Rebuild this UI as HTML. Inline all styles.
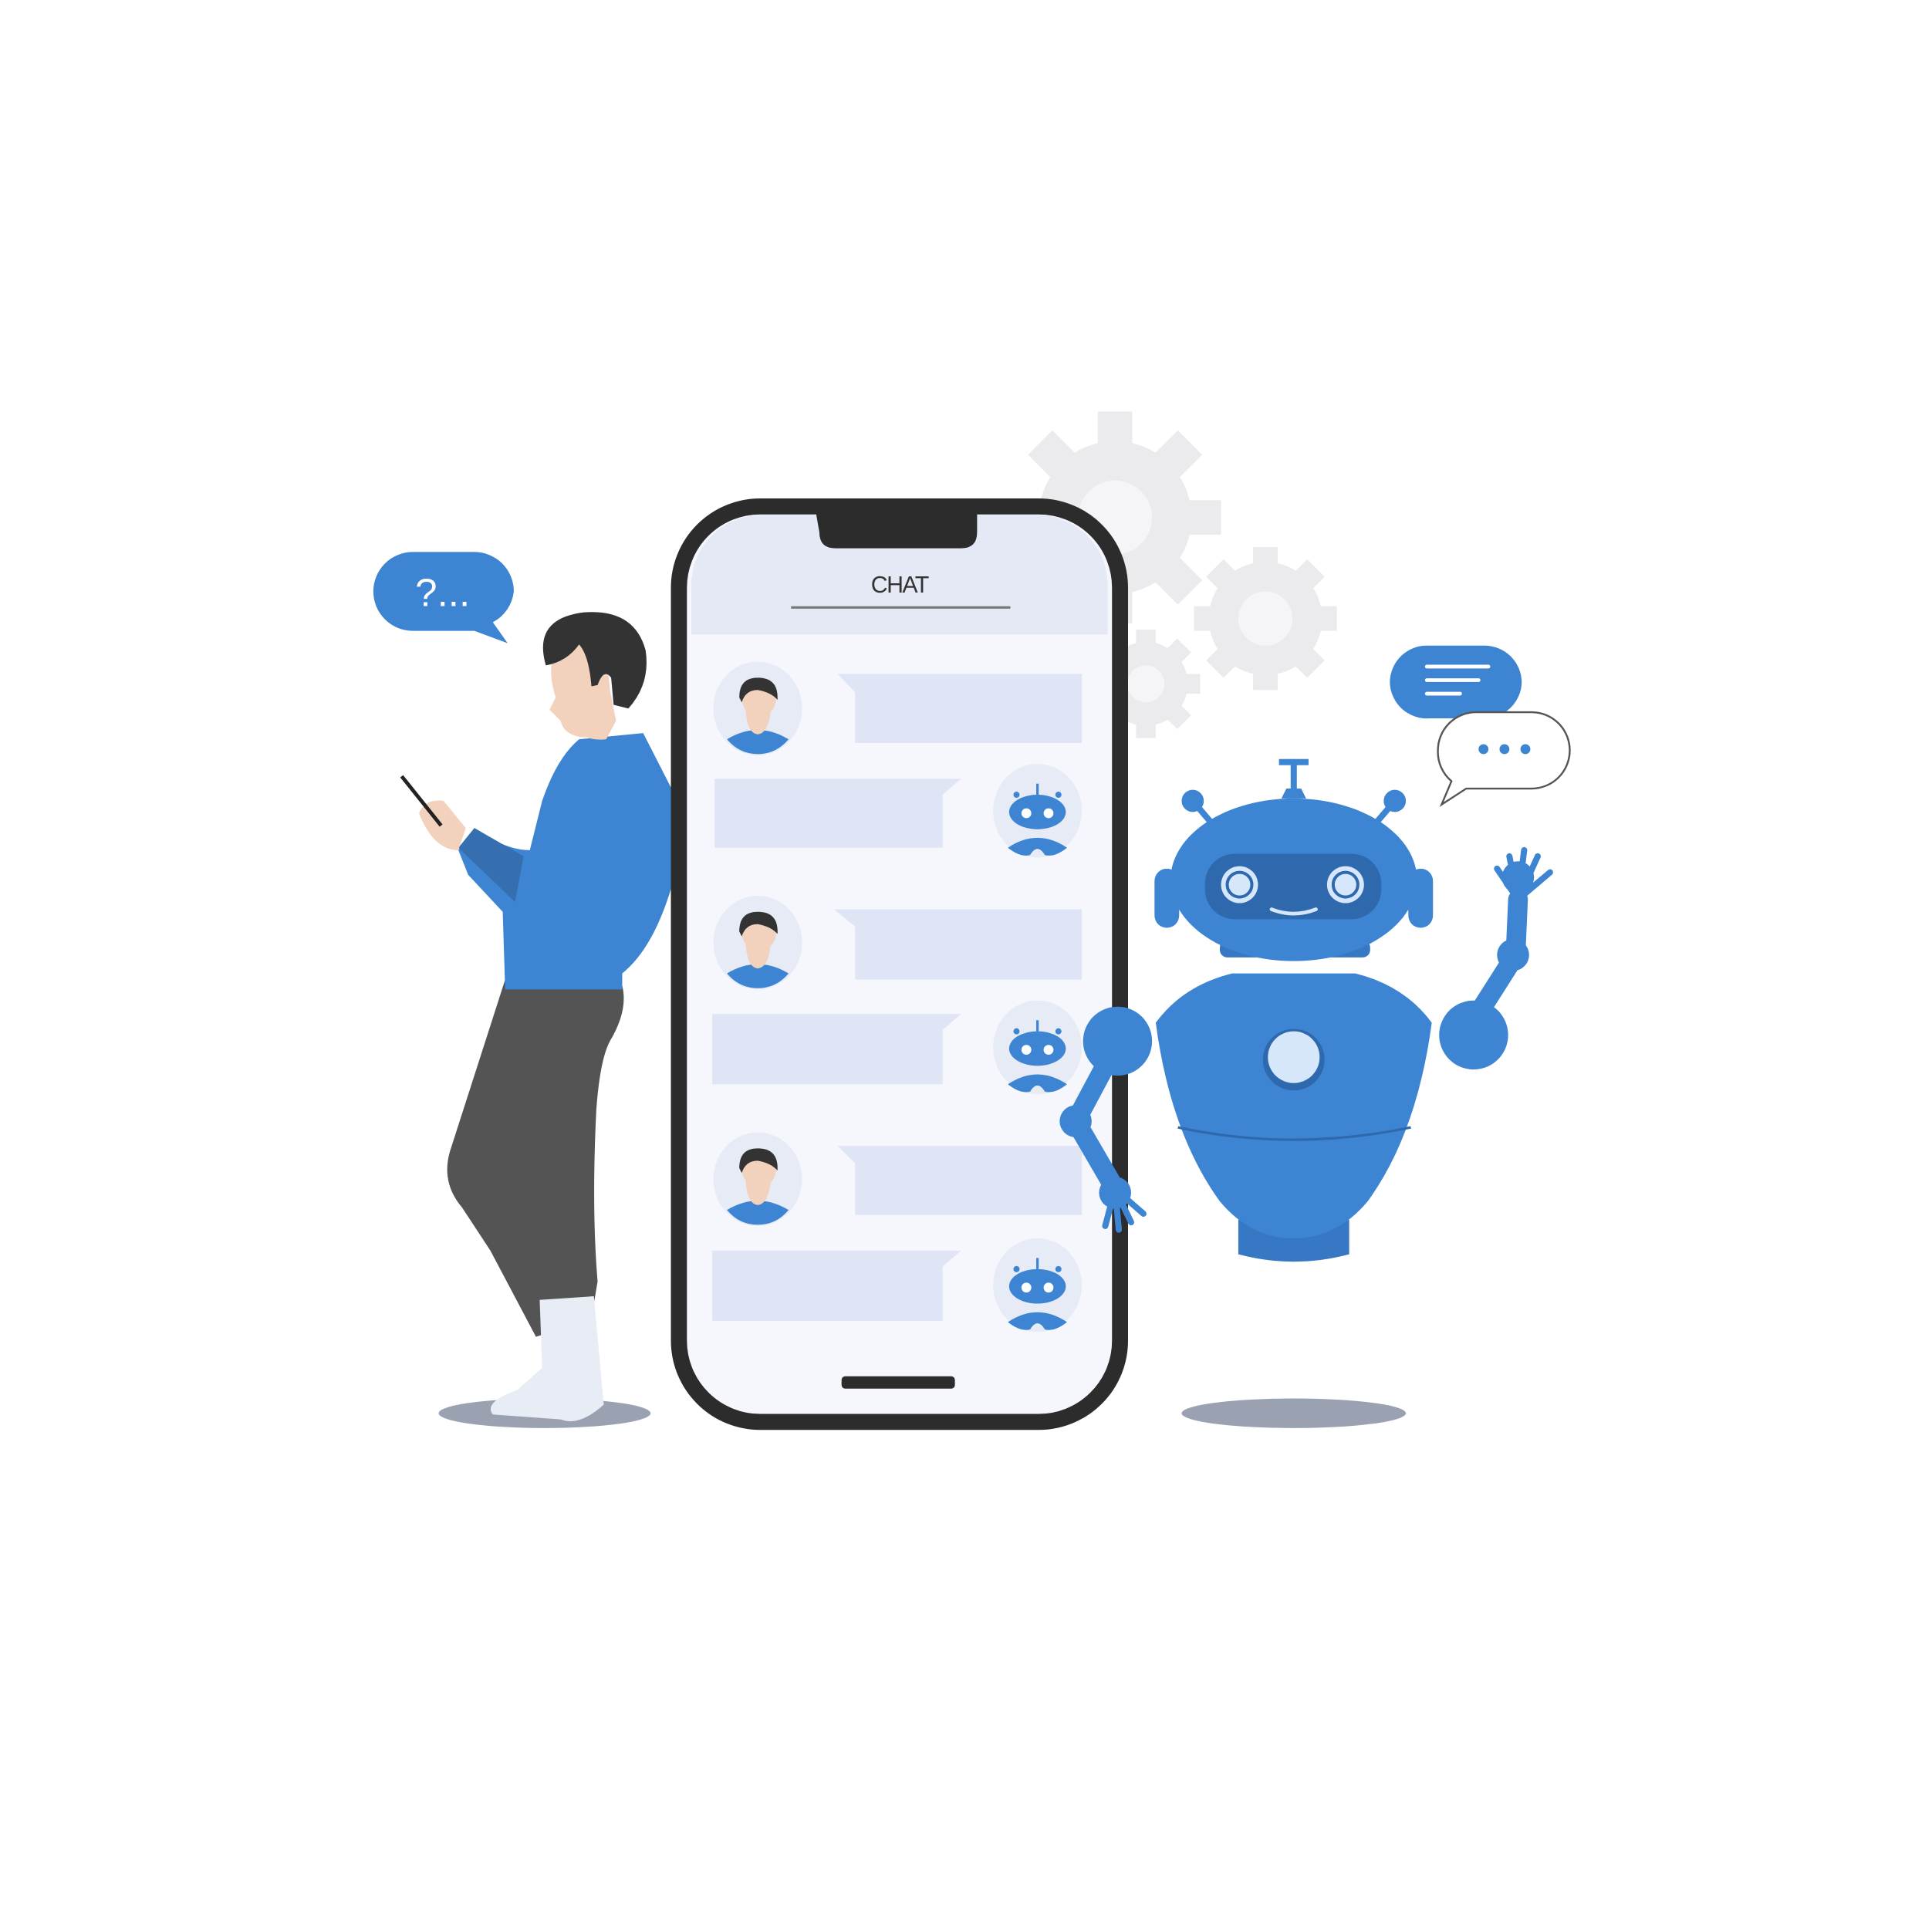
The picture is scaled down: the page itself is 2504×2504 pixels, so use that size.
<!DOCTYPE html>
<html><head><style>html,body{margin:0;padding:0;background:#fff}svg{display:block}</style></head>
<body>
<svg width="2504" height="2504" viewBox="0 0 1568 1568" xmlns="http://www.w3.org/2000/svg">
<rect width="1568" height="1568" fill="#fff"/>
<!-- gears -->
<g fill="#ebebed">
<circle cx="905" cy="420" r="62"/>
<g transform="translate(905,420)">
<rect x="-14" y="-86" width="28" height="172"/><rect x="-14" y="-86" width="28" height="172" transform="rotate(45)"/><rect x="-14" y="-86" width="28" height="172" transform="rotate(90)"/><rect x="-14" y="-86" width="28" height="172" transform="rotate(135)"/></g>
<circle cx="1027" cy="502" r="46"/>
<g transform="translate(1027,502)">
<rect x="-10" y="-58" width="20" height="116"/><rect x="-10" y="-58" width="20" height="116" transform="rotate(45)"/><rect x="-10" y="-58" width="20" height="116" transform="rotate(90)"/><rect x="-10" y="-58" width="20" height="116" transform="rotate(135)"/></g>
<circle cx="930" cy="555" r="34"/>
<g transform="translate(930,555)">
<rect x="-8" y="-44" width="16" height="88"/><rect x="-8" y="-44" width="16" height="88" transform="rotate(45)"/><rect x="-8" y="-44" width="16" height="88" transform="rotate(90)"/><rect x="-8" y="-44" width="16" height="88" transform="rotate(135)"/></g>
</g>
<circle cx="905" cy="420" r="30" fill="#f5f5f7"/>
<circle cx="1027" cy="502" r="22" fill="#f5f5f7"/>
<circle cx="930" cy="555" r="15" fill="#f5f5f7"/>
<!-- shadows -->
<ellipse cx="442" cy="1147" rx="86" ry="12" fill="#9aa2b2"/>
<ellipse cx="1050" cy="1147" rx="91" ry="12" fill="#9aa2b2"/>
<!-- bubble ?... -->
<path d="M335 448 H385 A32 32 0 0 1 417 480 A32 32 0 0 1 400 505 L412 522 L385 512 H335 A32 32 0 0 1 303 480 A32 32 0 0 1 335 448Z" fill="#3d85d2"/>
<text x="337" y="492" font-family="Liberation Sans,sans-serif" font-size="32" fill="#fff">?...</text>
<!-- man -->
<path d="M410 795 L365 935 Q358 960 375 980 L398 1015 L435 1085 L480 1070 L485 1040 Q480 980 484 900 Q487 860 495 845 Q510 820 505 800Z" fill="#545454"/>
<path d="M438 1055 L482 1052 L490 1140 Q470 1158 455 1152 L400 1148 Q392 1138 420 1128 L440 1110Z" fill="#e8ecf5"/>
<path d="M470 600 L522 595 L545 640 L545 720 Q530 770 505 790 L505 803 L410 803 L408 740 L380 710 L372 690 L385 672 Q410 690 430 690 L440 650 Q452 615 470 600Z" fill="#3d85d2"/>
<path d="M372 688 L385 672 L425 695 L418 732 Z" fill="#356fb0"/>
<path d="M340 660 Q345 648 360 650 L378 672 L372 690 Q352 690 340 660Z" fill="#f2d2bd"/>
<line x1="326" y1="630" x2="358" y2="670" stroke="#222" stroke-width="3"/>
<path d="M462 570 L466 590 Q474 602 492 600 L500 585 L495 560Z" fill="#f2d2bd"/>
<path d="M450 525 Q465 512 492 530 L498 588 Q488 600 470 598 Q457 595 455 585 L446 576 L451 566 Q444 545 450 525Z" fill="#f2d2bd"/>
<path d="M443 540 Q432 502 474 497 Q515 494 524 528 Q528 555 510 575 L498 572 L496 550 Q490 542 485 556 L480 557 Q478 532 470 523 Q460 537 443 540Z" fill="#333"/>
<!-- phone -->
<rect x="551" y="411" width="358" height="743" rx="66" fill="#f5f7fc" stroke="#2c2c2c" stroke-width="13"/>
<path d="M620 418 H842 A57 57 0 0 1 899 475 V515 H561 V475 A57 57 0 0 1 618 418Z" fill="#e5e9f6"/>
<path d="M662 415 H793 V432 Q793 445 780 445 H678 Q665 445 665 432Z" fill="#2c2c2c"/>
<text x="730" y="481" text-anchor="middle" font-family="Liberation Sans,sans-serif" font-size="19" fill="#333" letter-spacing="-1">CHAT</text>
<line x1="642" y1="493" x2="820" y2="493" stroke="#777" stroke-width="2"/>
<rect x="683" y="1117" width="92" height="10" rx="3" fill="#2c2c2c"/>
<g fill="#dfe5f5">
<path d="M680 547 H878 V603 H694 V562Z"/><path d="M580 632 H780 L765 645 V688 H580Z"/>
<path d="M677 738 H878 V795 H694 V752Z"/><path d="M578 823 H780 L765 836 V880 H578Z"/>
<path d="M680 930 H878 V986 H694 V944Z"/><path d="M578 1015 H780 L765 1028 V1072 H578Z"/>
</g>
<g id="u">
<ellipse cx="615" cy="575" rx="36" ry="38" fill="#e6ebf6"/>
<path d="M590 600 Q615 585 640 600 Q630 612 615 612 Q600 612 590 600Z" fill="#3d85d2"/>
<path d="M605 570 Q605 595 615 596 Q625 595 626 570Z" fill="#f2d2bd"/>
<ellipse cx="616" cy="566" rx="14" ry="16" fill="#f2d2bd"/>
<path d="M600 566 Q600 550 615 550 Q632 550 631 568 Q626 562 615 560 Q605 560 602 570Z" fill="#333"/>
</g>
<use href="#u" y="190"/><use href="#u" y="382"/>
<g id="b">
<ellipse cx="842" cy="658" rx="36" ry="38" fill="#e6ebf6"/>
<ellipse cx="842" cy="659" rx="23" ry="14" fill="#3d85d2"/>
<circle cx="833" cy="660" r="4" fill="#fff"/><circle cx="851" cy="660" r="4" fill="#fff"/>
<line x1="842" y1="636" x2="842" y2="645" stroke="#3d85d2" stroke-width="2"/>
<circle cx="825" cy="645" r="2.5" fill="#3d85d2"/><circle cx="859" cy="645" r="2.5" fill="#3d85d2"/>
<path d="M818 688 Q842 672 866 688 Q856 696 848 694 Q842 684 836 694 Q828 696 818 688Z" fill="#3d85d2"/>
</g>
<use href="#b" y="192"/><use href="#b" y="385"/>
<!-- robot arms -->
<g stroke="#3d85d2" stroke-width="16" stroke-linecap="round" fill="none">
<path d="M905 850 L873 910 L905 965"/>
<path d="M1195 830 L1230 775 L1232 730"/>
</g>
<g stroke="#3d85d2" stroke-width="5" stroke-linecap="round">
<path d="M905 965 L897 995 M905 965 L908 998 M905 965 L918 992 M905 965 L928 985"/>
<path d="M1232 730 L1215 705 M1232 730 L1225 695 M1232 730 L1237 690 M1232 730 L1248 695 M1232 730 L1258 708"/>
</g>
<circle cx="873" cy="910" r="13" fill="#3d85d2"/><circle cx="1228" cy="775" r="13" fill="#3d85d2"/>
<circle cx="907" cy="845" r="28" fill="#3d85d2"/><circle cx="1196" cy="840" r="28" fill="#3d85d2"/>
<circle cx="1232" cy="712" r="13" fill="#3d85d2"/><circle cx="905" cy="968" r="13" fill="#3d85d2"/>
<!-- robot body -->
<path d="M1005 990 H1095 V1018 Q1050 1030 1005 1018Z" fill="#3778c4"/>
<path d="M1000 790 H1100 Q1140 800 1162 830 Q1150 920 1110 975 Q1085 1005 1050 1005 Q1015 1005 990 975 Q950 920 938 830 Q960 800 1000 790Z" fill="#3d85d2"/>
<path d="M956 915 Q1050 935 1145 915" stroke="#2e68ad" stroke-width="2" fill="none"/>
<circle cx="1050" cy="860" r="25" fill="#2e68ad"/><circle cx="1050" cy="858" r="21" fill="#d6e7fb"/>
<rect x="990" y="763" width="122" height="14" rx="6" fill="#3778c4"/>
<!-- antennas -->
<g stroke="#3d85d2" stroke-width="5"><line x1="968" y1="650" x2="985" y2="670"/><line x1="1132" y1="650" x2="1115" y2="670"/><line x1="1050" y1="620" x2="1050" y2="645"/></g>
<circle cx="968" cy="650" r="9" fill="#3d85d2"/><circle cx="1132" cy="650" r="9" fill="#3d85d2"/>
<rect x="1038" y="616" width="24" height="5" fill="#3d85d2"/>
<path d="M1040 648 L1060 648 L1056 640 L1044 640Z" fill="#3d85d2"/>
<!-- head -->
<rect x="937" y="705" width="20" height="48" rx="10" fill="#3d85d2"/>
<rect x="1143" y="705" width="20" height="48" rx="10" fill="#3d85d2"/>
<ellipse cx="1050" cy="714" rx="100" ry="66" fill="#3d85d2"/>
<rect x="978" y="693" width="143" height="53" rx="24" fill="#2e68ad"/>
<circle cx="1006" cy="718" r="15" fill="#d6e7fb"/><circle cx="1006" cy="718" r="10" fill="none" stroke="#2e68ad" stroke-width="2.5"/>
<circle cx="1092" cy="718" r="15" fill="#d6e7fb"/><circle cx="1092" cy="718" r="10" fill="none" stroke="#2e68ad" stroke-width="2.5"/>
<path d="M1032 738 Q1050 745 1068 738" stroke="#d6e7fb" stroke-width="3" fill="none" stroke-linecap="round"/>
<!-- right bubbles -->
<path d="M1160 524 H1205 A30 30 0 0 1 1235 554 A30 30 0 0 1 1205 583 H1160 A30 30 0 0 1 1128 554 A30 30 0 0 1 1160 524Z" fill="#3d85d2"/>
<g stroke="#fff" stroke-width="3" stroke-linecap="round"><line x1="1158" y1="541" x2="1208" y2="541"/><line x1="1158" y1="552" x2="1200" y2="552"/><line x1="1158" y1="563" x2="1185" y2="563"/></g>
<path d="M1198 578 H1243 A31 31 0 0 1 1274 609 A31 31 0 0 1 1243 640 H1190 L1170 653 L1178 634 A31 31 0 0 1 1167 609 A31 31 0 0 1 1198 578Z" fill="#fff" stroke="#555" stroke-width="1.5"/>
<circle cx="1204" cy="608" r="4" fill="#3d85d2"/><circle cx="1221" cy="608" r="4" fill="#3d85d2"/><circle cx="1238" cy="608" r="4" fill="#3d85d2"/>
</svg>
</body></html>
